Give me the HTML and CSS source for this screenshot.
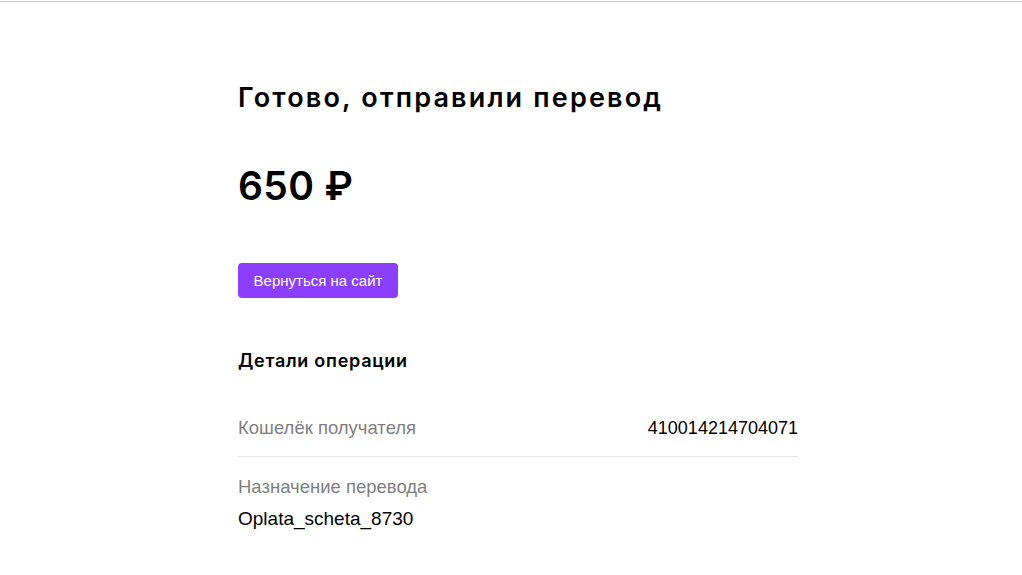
FILE: index.html
```html
<!DOCTYPE html>
<html lang="ru">
<head>
    <meta charset="UTF-8">
    <meta name="viewport" content="width=device-width, initial-scale=1.0">
    <title>Перевод отправлен</title>
    <link rel="stylesheet" href="styles.css">
</head>
<body>
    <div class="topline"></div>

    <div class="page">
        <h1 class="title">Готово, отправили перевод</h1>
        <div class="amount">650 ₽</div>

        <button class="back-btn">Вернуться на сайт</button>

        <h2 class="details-title">Детали операции</h2>

        <div class="row row-inline">
            <span class="label">Кошелёк получателя</span>
            <span class="value">410014214704071</span>
        </div>
        <div class="row">
            <div class="label">Назначение перевода</div>
            <div class="value">Oplata_scheta_8730</div>
        </div>
    </div>
</body>
</html>
```

FILE: styles.css
```css
body {
    margin: 0;
    font-family: Inter, 'Noto Sans', sans-serif;
    color: #000;
    background: #fff;
}
.topline {
    height: 1px;
    margin-top: 1px;
    background-color: #c5c8cc;
}
.page {
    width: 560px;
    margin: 0 auto;
    padding: 80px 0 0 14px;
}
.title {
    margin: 0;
    font-size: 27px;
    line-height: 32px;
    font-weight: 600;
    letter-spacing: 0.08em;
}
.amount {
    margin-top: 48px;
    font-size: 39px;
    line-height: 48px;
    font-weight: 600;
    letter-spacing: 0.01em;
}
.back-btn {
    margin-top: 53px;
    background-color: #8b3ffd;
    color: #fff;
    border: none;
    border-radius: 4px;
    height: 35px;
    width: 160px;
    font-family: 'Liberation Sans', Arial, sans-serif;
    font-size: 15px;
    cursor: pointer;
}
.details-title {
    margin: 51px 0 0;
    font-size: 18px;
    line-height: 24px;
    font-weight: 600;
    letter-spacing: 0.04em;
}
.row {
    padding: 18px 0 12px;
    font-family: 'Liberation Sans', Arial, sans-serif;
    font-size: 18.5px;
    line-height: 24px;
}
.row-inline {
    display: flex;
    justify-content: space-between;
    margin-top: 43px;
    padding-top: 0;
    padding-bottom: 16px;
    border-bottom: 1px solid #e6e6e6;
}
.label {
    color: #7f7f7f;
}
.row .value {
    margin-top: 8px;
    font-size: 19px;
}
.row-inline .value {
    margin-top: 0;
    font-size: 18px;
}
```
